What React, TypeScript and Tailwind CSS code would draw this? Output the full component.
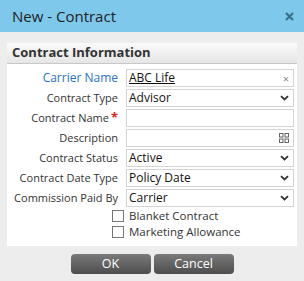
import React from 'react'

const font = { fontFamily: '"Open Sans", "Liberation Sans", sans-serif' }

function Chevron() {
  return (
    <svg width="9" height="6" viewBox="0 0 9 6" className="shrink-0">
      <path d="M1 1.2 L4.5 4.5 L8 1.2" fill="none" stroke="#333" strokeWidth="1.8" />
    </svg>
  )
}

function GridIcon() {
  return (
    <svg width="10" height="10" viewBox="0 0 10 10" className="shrink-0">
      <rect x="0.5" y="0.5" width="3.5" height="3.5" fill="none" stroke="#666" />
      <rect x="6" y="0.5" width="3.5" height="3.5" fill="none" stroke="#666" />
      <rect x="0.5" y="6" width="3.5" height="3.5" fill="none" stroke="#666" />
      <rect x="6" y="6" width="3.5" height="3.5" fill="none" stroke="#666" />
    </svg>
  )
}

const rows = [
  { label: 'Carrier Name', value: 'ABC Life', kind: 'lookup', blue: true },
  { label: 'Contract Type', value: 'Advisor', kind: 'select' },
  { label: 'Contract Name', value: '', kind: 'text', required: true },
  { label: 'Description', value: '', kind: 'grid' },
  { label: 'Contract Status', value: 'Active', kind: 'select' },
  { label: 'Contract Date Type', value: 'Policy Date', kind: 'select' },
  { label: 'Commission Paid By', value: 'Carrier', kind: 'select' },
]

export default function App() {
  return (
    <div className="w-[304px] h-[281px] bg-[#ededed] flex flex-col" style={font}>
      {/* Title bar */}
      <div className="h-[32px] bg-[#7ec9eb] flex items-center justify-between pl-[12px] pr-[10px]">
        <span className="text-[15px] text-[#222] leading-none">New - Contract</span>
        <svg width="9" height="9" viewBox="0 0 9 9">
          <path d="M1 1 L8 8 M8 1 L1 8" stroke="#3d6f88" strokeWidth="2.2" />
        </svg>
      </div>

      {/* Panel */}
      <div className="mx-[7px] mt-[11px] w-[290px] bg-white">
        <div className="h-[21px] bg-gradient-to-b from-[#fafafa] to-[#e6e6e6] border-b border-[#c8c8c8] flex items-center px-[5px]">
          <span className="text-[13px] font-bold text-[#333]">Contract Information</span>
        </div>
        <div className="flex flex-col gap-[2px] pt-[5px] pb-[8px]">
          {rows.map((r) => (
            <div key={r.label} className="flex items-center h-[18px]">
              <div className="w-[119px] flex justify-end items-center pr-[8px] whitespace-nowrap">
                <span className={r.blue ? 'text-[12px] text-[#1f73c8]' : 'text-[11px] text-[#333]'}>{r.label}</span>
                {r.required && <span className="text-[#e02020] text-[13px] font-bold leading-none ml-[2px] -mt-[2px]">*</span>}
              </div>
              <div className="w-[168px] h-[18px] border border-[#d4d4d4] flex items-center justify-between pl-[2px] pr-[4px]">
                <span className={`text-[12px] text-[#111] ${r.kind === 'lookup' ? 'underline' : ''}`}>{r.value}</span>
                {r.kind === 'lookup' && <span className="text-[11px] text-[#888] leading-none">×</span>}
                {r.kind === 'select' && <Chevron />}
                {r.kind === 'grid' && <GridIcon />}
              </div>
            </div>
          ))}
          <div className="flex flex-col gap-[4px] pl-[105px] mt-[1px]">
            {['Blanket Contract', 'Marketing Allowance'].map((t) => (
              <div key={t} className="flex items-center gap-[5px]">
                <span className="w-[12px] h-[12px] border border-[#777] bg-white" />
                <span className="text-[11.5px] text-[#333] leading-none">{t}</span>
              </div>
            ))}
          </div>
        </div>
      </div>

      {/* Buttons */}
      <div className="flex justify-center gap-[3px] mt-[8px]">
        {['OK', 'Cancel'].map((b) => (
          <button
            key={b}
            className="w-[80px] h-[20px] rounded-[4px] bg-gradient-to-b from-[#7a7a7a] to-[#4e4e4e] text-white text-[12.5px] leading-none"
          >
            {b}
          </button>
        ))}
      </div>
    </div>
  )
}
